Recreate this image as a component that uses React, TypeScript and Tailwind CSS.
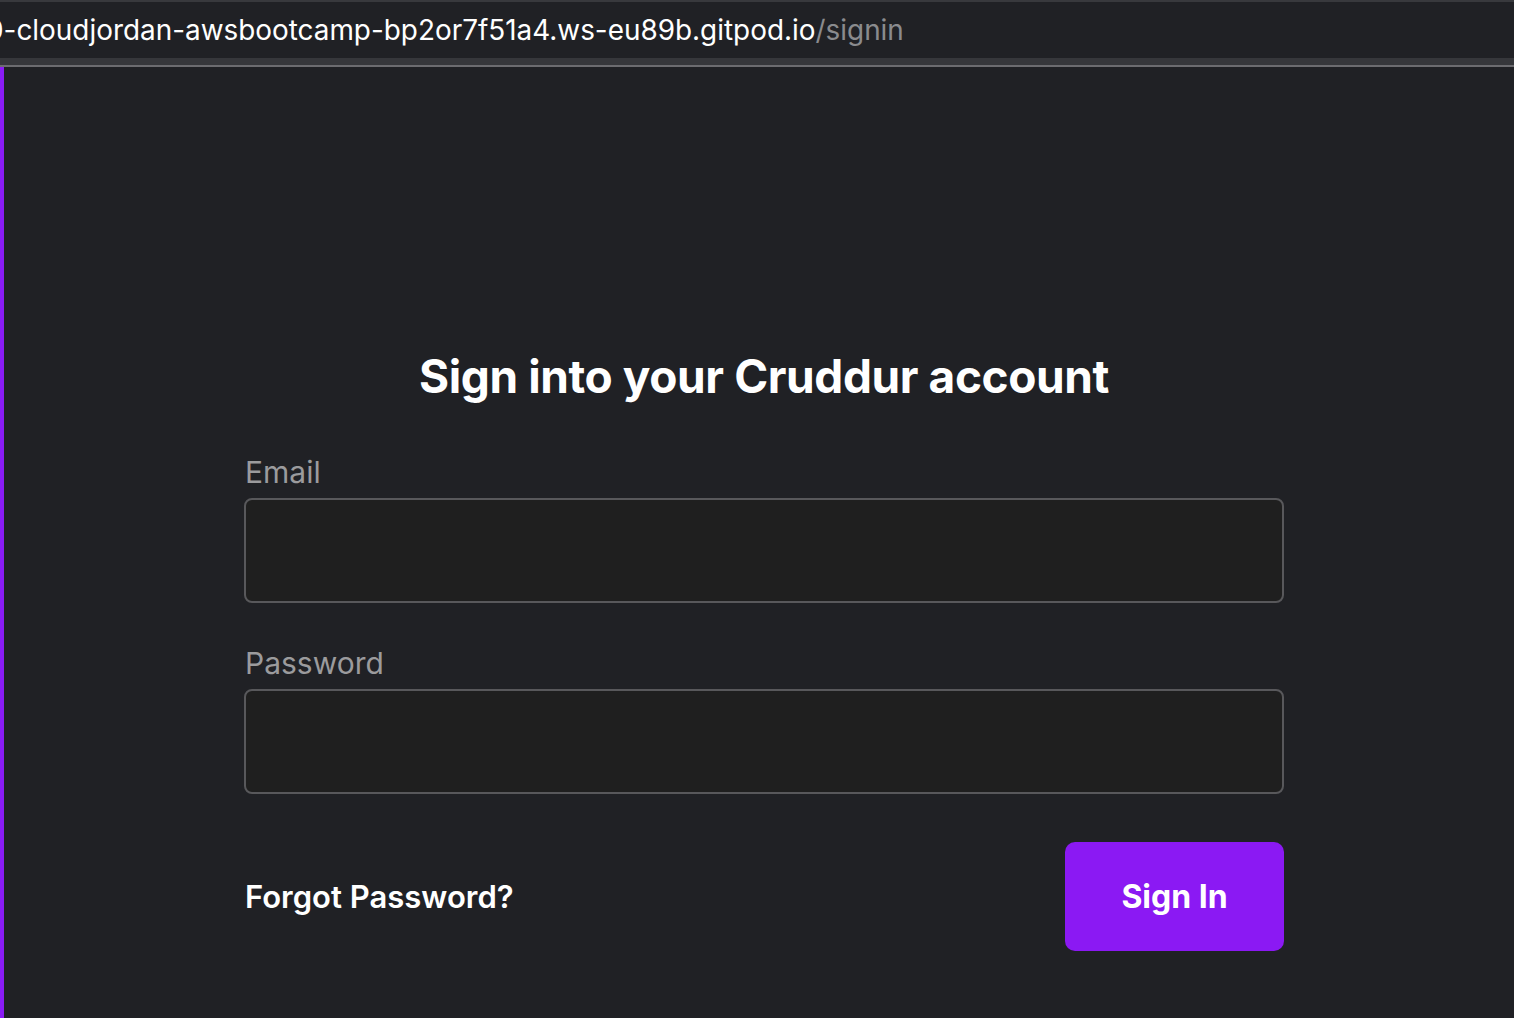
export default function App() {
  return (
    <div className="w-[1514px] h-[1018px] overflow-hidden bg-[#202125] flex flex-col" style={{ fontFamily: "Inter, 'Liberation Sans', sans-serif" }}>
      {/* address bar */}
      <div className="border-t-2 border-[#38393d] h-[58px] flex items-center overflow-hidden">
        <div className="ml-[-14px] mt-[2px] whitespace-nowrap text-[27.9px] leading-none text-white">
          0-cloudjordan-awsbootcamp-bp2or7f51a4.ws-eu89b.gitpod.io<span className="text-[#8a8b8e]">/signin</span>
        </div>
      </div>
      <div className="h-[7px] bg-[#36373b]" />
      <div className="h-[2px] bg-[#6c6c70]" />

      <div className="flex flex-1">
        <div className="w-[4px] bg-[#8a1cf5]" />
        <div className="flex-1 flex justify-center pl-[10px]">
          <div className="w-[1040px] pt-[286px]">
            <h1 className="text-center text-white font-bold text-[46px] leading-none tracking-[-0.4px]">
              Sign into your Cruddur account
            </h1>

            <div className="mt-[58px]">
              <label className="block text-[30px] leading-none text-[#9b9b9d] pl-[1px]">Email</label>
              <input className="mt-[11px] block w-full h-[105px] rounded-[8px] border-2 border-[#58585b] bg-[#1f1f1f] outline-none" />
            </div>

            <div className="mt-[45px]">
              <label className="block text-[30px] leading-none text-[#9b9b9d] pl-[1px]">Password</label>
              <input type="password" className="mt-[11px] block w-full h-[105px] rounded-[8px] border-2 border-[#58585b] bg-[#1f1f1f] outline-none" />
            </div>

            <div className="mt-[48px] flex items-center justify-between">
              <a className="text-white text-[31px] font-semibold leading-none pl-[1px]">Forgot Password?</a>
              <button className="w-[219px] h-[109px] rounded-[10px] bg-[#8b19f3] text-white text-[32px] font-bold">
                Sign In
              </button>
            </div>
          </div>
        </div>
      </div>
    </div>
  )
}
